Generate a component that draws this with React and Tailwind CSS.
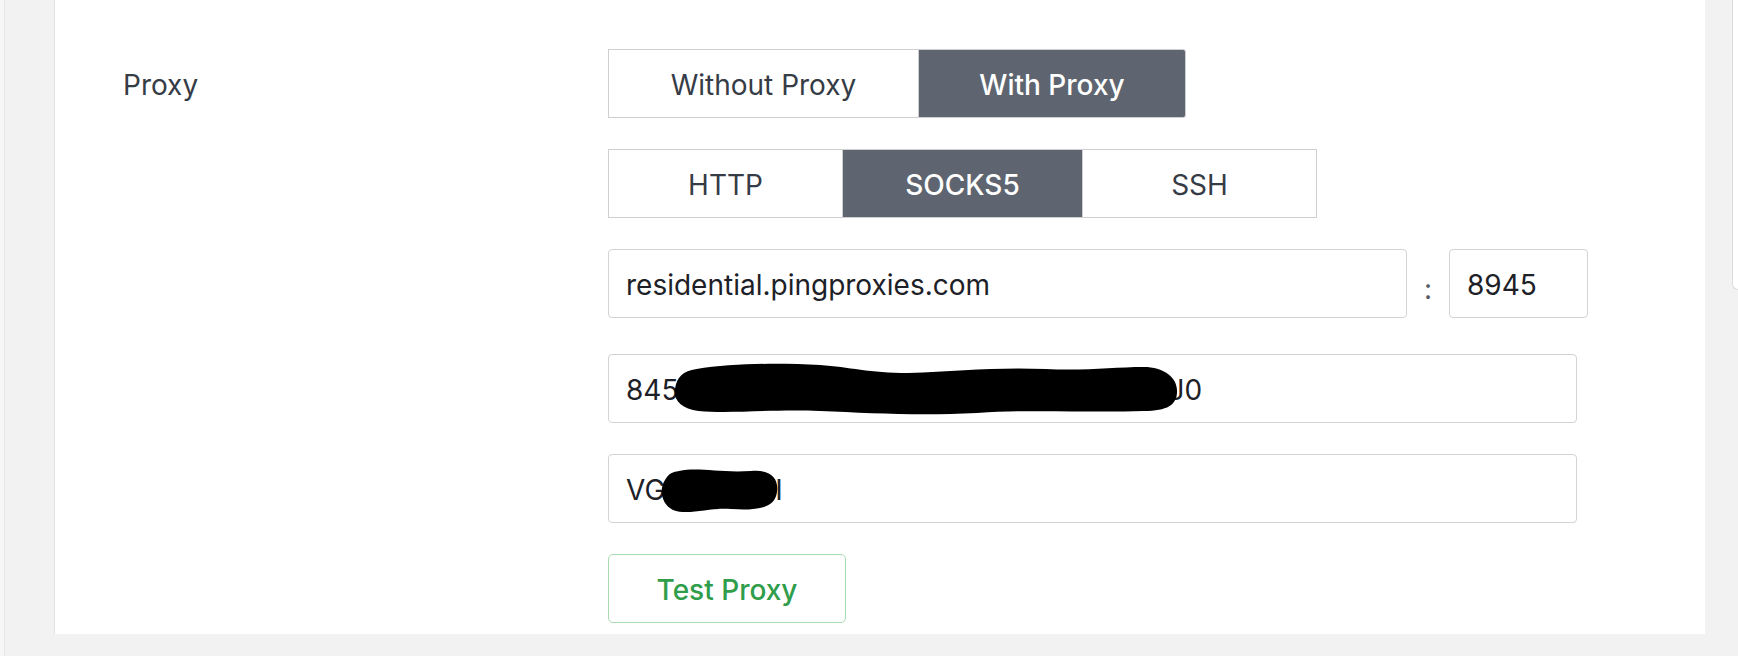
export default function App() {
  const seg = "flex h-[69px] items-center justify-center border border-[#cfcfcf] pt-[3px] text-[28px]";
  const input = "relative flex h-[69px] items-center rounded-[4px] border border-[#d3d3d3] bg-white px-[17px] pt-[2px] text-[28px] text-[#1d2127]";
  return (
    <div className="flex h-[656px] w-full overflow-hidden bg-[#f2f2f2] font-[Inter,sans-serif]">
      <div className="h-full w-[5px] shrink-0 border-r border-[#e6e6e6] bg-[#f6f6f6]" />
      <div className="ml-[49px] h-[634px] w-[1651px] shrink-0 border-l border-[#e2e2e2] bg-white">
        <div className="grid grid-cols-[553px_1fr] pt-[49px]">
          <div className="flex h-[69px] items-center pl-[68px] pt-[3px] text-[28px] text-[#363c46]">Proxy</div>
          <div className="flex flex-col">
            <div className="flex">
              <div className={`${seg} w-[310px] border-r-0 bg-white text-[#363c46]`}>Without Proxy</div>
              <div className={`${seg} w-[268px] rounded-r-[3px] border-[#4f5660] bg-[#5e6570] font-medium text-white`}>With Proxy</div>
            </div>
            <div className="mt-[31px] flex">
              <div className={`${seg} w-[234px] border-r-0 bg-white text-[#363c46]`}>HTTP</div>
              <div className={`${seg} w-[241px] border-[#4f5660] bg-[#5e6570] font-medium text-white`}>SOCKS5</div>
              <div className={`${seg} w-[234px] border-l-0 bg-white text-[#363c46]`}>SSH</div>
            </div>
            <div className="mt-[31px] flex items-center">
              <div className={`${input} w-[799px]`}>residential.pingproxies.com</div>
              <div className="w-[42px] pt-[10px] text-center text-[28px] text-[#555b63]">:</div>
              <div className={`${input} w-[139px]`}>8945</div>
            </div>
            <div className={`${input} mt-[36px] w-[969px]`}>
              <span>845</span>
              <span className="inline-block w-[490px]" />
              <span>J0</span>
              <svg className="absolute left-[64px] top-[6px] h-[56px] w-[508px]" viewBox="0 0 518 56" preserveAspectRatio="none">
                <path
                  fill="#000"
                  d="M 24 8 C 60 2, 110 2, 150 4 C 180 6, 200 12, 240 12 C 290 10, 330 6, 380 8 C 420 10, 450 6, 480 6 C 500 6, 514 16, 514 30 C 514 44, 504 50, 480 50 C 420 52, 370 48, 310 52 C 250 55, 200 52, 150 50 C 100 48, 60 53, 26 50 C 8 48, 0 38, 2 28 C 4 16, 10 10, 24 8 Z"
                />
              </svg>
            </div>
            <div className={`${input} mt-[31px] w-[969px]`}>
              <span>VG</span>
              <span className="inline-block w-[110px]" />
              <span>I</span>
              <svg className="absolute left-[50px] top-[12px] h-[47px] w-[120px]" viewBox="0 0 120 47">
                <path
                  fill="#000"
                  d="M 20 4 C 40 0, 60 6, 92 4 C 112 2, 120 12, 118 25 C 116 40, 102 44, 72 42 C 50 40, 30 49, 14 43 C 2 37, 0 22, 6 13 C 10 6, 14 5, 20 4 Z"
                />
              </svg>
            </div>
            <button className="mt-[31px] flex h-[69px] w-[238px] items-center justify-center rounded-[5px] border border-[#a8dbb2] bg-white pt-[3px] text-[28px] font-medium text-[#2f9d4a]">
              Test Proxy
            </button>
          </div>
        </div>
      </div>
      <div className="ml-[27px] h-[290px] w-[6px] shrink-0 rounded-bl-[6px] border-b border-l border-[#dcdcdc] bg-white" />
    </div>
  );
}
